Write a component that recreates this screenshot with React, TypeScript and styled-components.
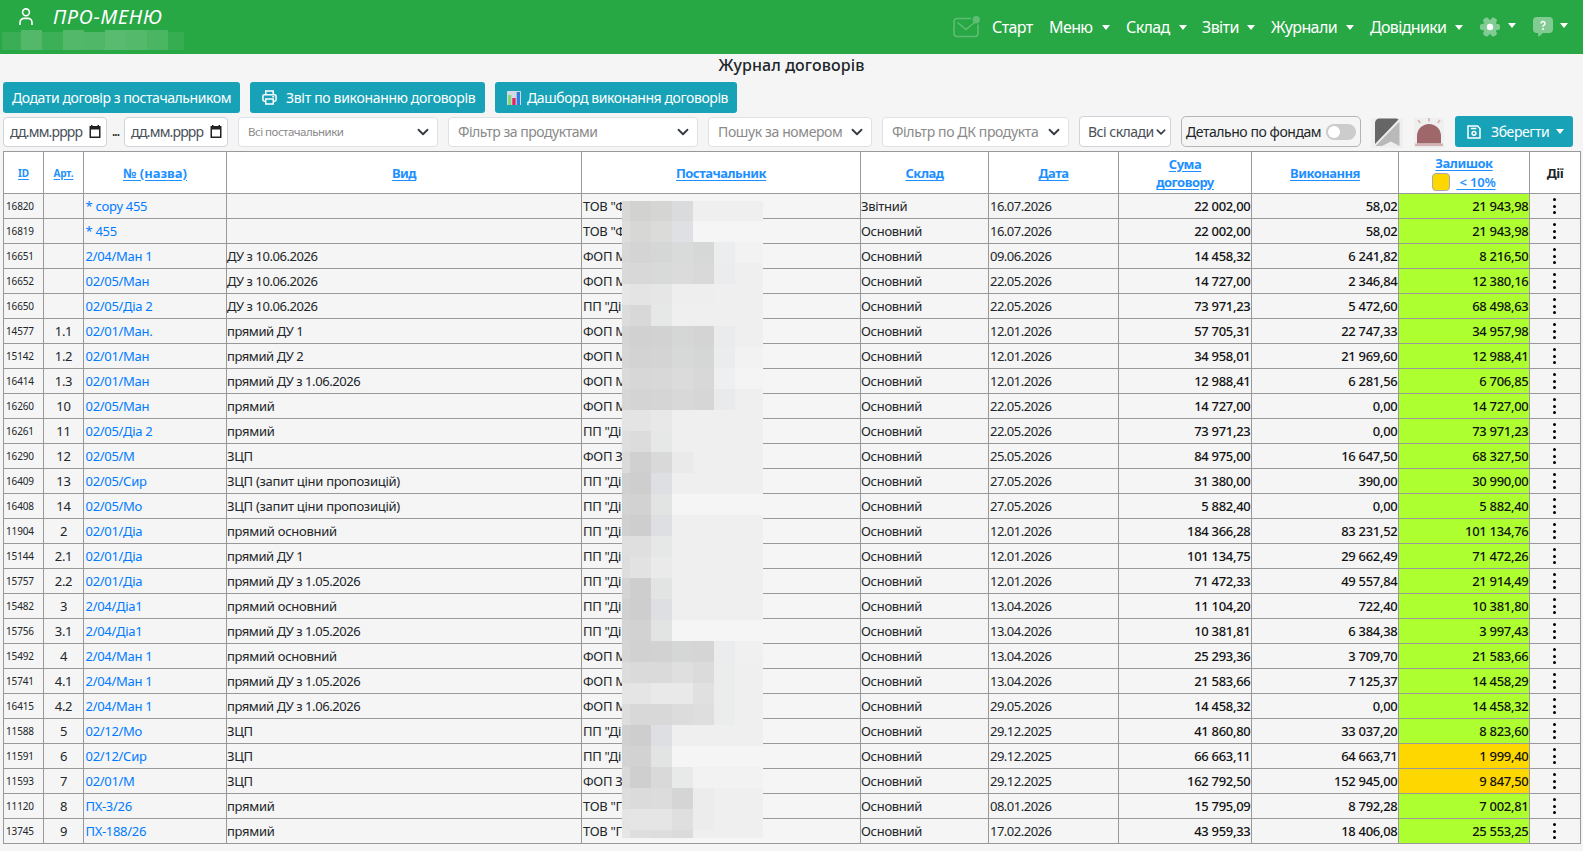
import styled, { createGlobalStyle } from "styled-components";

const GlobalStyle = createGlobalStyle`
    * {
        box-sizing: border-box;
    }

    body {
        margin: 0;
        background: #f5f5f5;
        color: #212529;
        font-family: "Noto Sans", "Open Sans", sans-serif;
        font-size: 14px;
        overflow: hidden;
    }
`;

const Header = styled.header`
    display: flex;
    justify-content: space-between;
    height: 54px;
    background: #28a745;
    color: #fff;
`;

const Brand = styled.div`
    padding: 2px 0 0 2px;
`;

const BrandTitle = styled.div`
    display: flex;
    align-items: center;
    height: 28px;
    padding-left: 17px;
    gap: 20px;
    font-size: 20px;
    font-style: italic;
    letter-spacing: 0.75px;

    svg {
        display: block;
    }
`;

const BrandMosaic = styled.div`
    display: flex;
    align-items: flex-end;
    height: 20px;
`;

const BrandCell = styled.div<{ $width: number; $alpha: number; $tall?: boolean }>`
    width: ${(p) => p.$width}px;
    height: ${(p) => (p.$tall ? 20 : 18)}px;
    background: rgba(255, 255, 255, ${(p) => p.$alpha});
`;

const Nav = styled.nav`
    display: flex;
    align-items: center;
    height: 54px;
    padding-right: 15px;
    font-size: 16px;
`;

const NavItem = styled.div<{ $width: number; $gap?: number; $spacing?: number }>`
    display: flex;
    align-items: center;
    justify-content: space-between;
    width: ${(p) => p.$width}px;
    margin-right: ${(p) => p.$gap ?? 16}px;
    letter-spacing: ${(p) => p.$spacing ?? -0.6}px;
    white-space: nowrap;

    svg {
        display: block;
    }
`;

const Caret = styled.span<{ $up?: number; $shift?: number }>`
    border-top: 5px solid #fff;
    border-left: 4.5px solid transparent;
    border-right: 4.5px solid transparent;
    margin-bottom: ${(p) => p.$up ?? 0}px;
    margin-left: ${(p) => p.$shift ?? 0}px;
`;

const Title = styled.h1`
    margin: 0;
    height: 28px;
    line-height: 23px;
    font-size: 16px;
    font-weight: 500;
    text-align: center;
    letter-spacing: 0.1px;
`;

const Actions = styled.div`
    display: flex;
    gap: 10px;
    padding-left: 3px;
`;

const Button = styled.button<{ $width: number; $pad?: number; $gap?: number; $spacing?: number }>`
    display: flex;
    align-items: center;
    width: ${(p) => p.$width}px;
    height: 31px;
    padding: 0 0 0 ${(p) => p.$pad ?? 9}px;
    gap: ${(p) => p.$gap ?? 8}px;
    border: 0;
    border-radius: 3px;
    background: #17a2b8;
    color: #fff;
    font-family: inherit;
    font-size: 14px;
    letter-spacing: ${(p) => p.$spacing ?? -0.42}px;
    white-space: nowrap;
`;

const Filters = styled.div`
    display: flex;
    align-items: center;
    height: 31px;
    margin-top: 3px;
    padding-left: 3px;
`;

const Field = styled.div<{ $width: number; $gap?: number; $native?: boolean; $size?: number; $spacing?: number }>`
    display: flex;
    align-items: center;
    justify-content: space-between;
    width: ${(p) => p.$width}px;
    height: ${(p) => (p.$native ? 31 : 30)}px;
    margin-right: ${(p) => p.$gap ?? 10}px;
    padding: 0 ${(p) => (p.$native ? 4 : 8)}px 0 ${(p) => (p.$native ? 8 : 9)}px;
    border: 1px solid ${(p) => (p.$native ? "#ced4da" : "#dee2e6")};
    border-radius: 4px;
    background: #fff;
    color: ${(p) => (p.$native ? "#495057" : "#8a8a8a")};
    font-size: ${(p) => p.$size ?? 14}px;
    letter-spacing: ${(p) => p.$spacing ?? -0.38}px;
    white-space: nowrap;

    svg {
        display: block;
        flex: none;
    }
`;

const DateField = styled(Field)`
    height: 30px;
    padding: 0 5px 0 6px;
    letter-spacing: -0.85px;
`;

const Dots = styled.span`
    width: 17px;
    text-align: center;
    letter-spacing: -1px;
    font-weight: 600;
    font-size: 12px;
`;

const FundsToggle = styled.div`
    display: flex;
    align-items: center;
    justify-content: space-between;
    width: 180px;
    height: 31px;
    margin-right: 10px;
    padding: 0 4px 0 4px;
    border: 1px solid #b5b5b5;
    border-radius: 5px;
    letter-spacing: -0.45px;
    white-space: nowrap;
`;

const Switch = styled.span`
    display: flex;
    align-items: center;
    width: 30px;
    height: 16px;
    padding-left: 2px;
    border-radius: 8px;
    background: #ccc;

    &::before {
        content: "";
        width: 12px;
        height: 12px;
        border-radius: 50%;
        background: #fff;
    }
`;

const IconTile = styled.div<{ $width: number; $gap: number }>`
    width: ${(p) => p.$width}px;
    height: 30px;
    margin: 2px ${(p) => p.$gap}px 0 0;
    background: #efefef;

    svg {
        display: block;
    }
`;

const TableWrap = styled.div`
    position: relative;
    margin: 4px 0 0 3px;
    width: 1578px;
`;

const Table = styled.table`
    width: 1578px;
    table-layout: fixed;
    border-collapse: collapse;
    font-size: 13px;
    letter-spacing: -0.3px;

    th,
    td {
        border: 1px solid #999;
        padding: 0 1px;
        line-height: 18px;
        white-space: nowrap;
    }
`;

const HeadCell = styled.th<{ $small?: boolean; $plain?: boolean; $spacing?: number }>`
    height: 42px;
    background: #fff;
    color: ${(p) => (p.$plain ? "#212529" : "#1e90ff")};
    font-size: ${(p) => (p.$small ? 10 : 13)}px;
    font-weight: 700;
    letter-spacing: ${(p) => p.$spacing ?? (p.$small ? -0.2 : -0.5)}px;

    u {
        text-underline-offset: 2px;
    }
`;

const LowBalance = styled.span`
    display: flex;
    align-items: center;
    justify-content: center;
    gap: 6px;
    height: 19px;
    font-weight: 600;
    letter-spacing: -0.2px;

    u {
        white-space: pre;
    }
`;

const Swatch = styled.i`
    width: 18px;
    height: 18px;
    border: 1px solid #aaa;
    border-radius: 4px;
    background: gold;
`;

const Row = styled.tr`
    height: 25px;
`;

const IdCell = styled.td`
    font-size: 10px;
    letter-spacing: -0.15px;

    && {
        padding: 0 0 1px 2px;
    }
`;

const ArtCell = styled.td`
    text-align: center;
`;

const NameCell = styled.td`
    color: #007bff;

    && {
        padding-left: 1.5px;
    }
`;

const TextCell = styled.td<{ $spacing?: number }>`
    letter-spacing: ${(p) => p.$spacing ?? -0.3}px;

    && {
        padding-left: 0;
    }
`;

const DateCell = styled.td`
    letter-spacing: -0.5px;
`;

const MoneyCell = styled.td<{ $bg?: string }>`
    background: ${(p) => p.$bg || "transparent"};
    text-align: right;
    font-weight: 500;
    color: #111;

    && {
        padding-right: 0.5px;
    }
`;

const MenuDots = styled.div`
    display: flex;
    flex-direction: column;
    align-items: center;
    gap: 3.7px;
    padding-right: 1px;

    i {
        width: 3px;
        height: 3px;
        border-radius: 50%;
        background: #000;
    }
`;

// pixelated cover over supplier names
const Mosaic = styled.div`
    position: absolute;
    left: 619px;
    top: 50px;
    display: grid;
    grid-template-columns: 8px 21px 21px 21px 21px 21px 28px;
    grid-template-rows: 20px repeat(29, 21px) 8px;
`;

const MosaicCell = styled.div<{ $color: string }>`
    background: ${(p) => p.$color};
`;

const columns = [40, 40, 143, 355, 279, 128, 130, 133, 147, 131, 51];

const rows = [
    ["16820", "", "* copy 455", "", 'ТОВ "Ф', "Звітний", "16.07.2026", "22 002,00", "58,02", "21 943,98"],
    ["16819", "", "* 455", "", 'ТОВ "Ф', "Основний", "16.07.2026", "22 002,00", "58,02", "21 943,98"],
    ["16651", "", "2/04/Ман 1", "ДУ з 10.06.2026", "ФОП М", "Основний", "09.06.2026", "14 458,32", "6 241,82", "8 216,50"],
    ["16652", "", "02/05/Ман", "ДУ з 10.06.2026", "ФОП М", "Основний", "22.05.2026", "14 727,00", "2 346,84", "12 380,16"],
    ["16650", "", "02/05/Діа 2", "ДУ з 10.06.2026", 'ПП "Ді', "Основний", "22.05.2026", "73 971,23", "5 472,60", "68 498,63"],
    ["14577", "1.1", "02/01/Ман.", "прямий ДУ 1", "ФОП М", "Основний", "12.01.2026", "57 705,31", "22 747,33", "34 957,98"],
    ["15142", "1.2", "02/01/Ман", "прямий ДУ 2", "ФОП М", "Основний", "12.01.2026", "34 958,01", "21 969,60", "12 988,41"],
    ["16414", "1.3", "02/01/Ман", "прямий ДУ з 1.06.2026", "ФОП М", "Основний", "12.01.2026", "12 988,41", "6 281,56", "6 706,85"],
    ["16260", "10", "02/05/Ман", "прямий", "ФОП М", "Основний", "22.05.2026", "14 727,00", "0,00", "14 727,00"],
    ["16261", "11", "02/05/Діа 2", "прямий", 'ПП "Ді', "Основний", "22.05.2026", "73 971,23", "0,00", "73 971,23"],
    ["16290", "12", "02/05/М", "ЗЦП", "ФОП З", "Основний", "25.05.2026", "84 975,00", "16 647,50", "68 327,50"],
    ["16409", "13", "02/05/Сир", "ЗЦП (запит ціни пропозицій)", 'ПП "Ді', "Основний", "27.05.2026", "31 380,00", "390,00", "30 990,00"],
    ["16408", "14", "02/05/Мо", "ЗЦП (запит ціни пропозицій)", 'ПП "Ді', "Основний", "27.05.2026", "5 882,40", "0,00", "5 882,40"],
    ["11904", "2", "02/01/Діа", "прямий основний", 'ПП "Ді', "Основний", "12.01.2026", "184 366,28", "83 231,52", "101 134,76"],
    ["15144", "2.1", "02/01/Діа", "прямий ДУ 1", 'ПП "Ді', "Основний", "12.01.2026", "101 134,75", "29 662,49", "71 472,26"],
    ["15757", "2.2", "02/01/Діа", "прямий ДУ з 1.05.2026", 'ПП "Ді', "Основний", "12.01.2026", "71 472,33", "49 557,84", "21 914,49"],
    ["15482", "3", "2/04/Діа1", "прямий основний", 'ПП "Ді', "Основний", "13.04.2026", "11 104,20", "722,40", "10 381,80"],
    ["15756", "3.1", "2/04/Діа1", "прямий ДУ з 1.05.2026", 'ПП "Ді', "Основний", "13.04.2026", "10 381,81", "6 384,38", "3 997,43"],
    ["15492", "4", "2/04/Ман 1", "прямий основний", "ФОП М", "Основний", "13.04.2026", "25 293,36", "3 709,70", "21 583,66"],
    ["15741", "4.1", "2/04/Ман 1", "прямий ДУ з 1.05.2026", "ФОП М", "Основний", "13.04.2026", "21 583,66", "7 125,37", "14 458,29"],
    ["16415", "4.2", "2/04/Ман 1", "прямий ДУ з 1.06.2026", "ФОП М", "Основний", "29.05.2026", "14 458,32", "0,00", "14 458,32"],
    ["11588", "5", "02/12/Мо", "ЗЦП", 'ПП "Ді', "Основний", "29.12.2025", "41 860,80", "33 037,20", "8 823,60"],
    ["11591", "6", "02/12/Сир", "ЗЦП", 'ПП "Ді', "Основний", "29.12.2025", "66 663,11", "64 663,71", "1 999,40"],
    ["11593", "7", "02/01/М", "ЗЦП", "ФОП З", "Основний", "29.12.2025", "162 792,50", "152 945,00", "9 847,50"],
    ["11120", "8", "ПХ-3/26", "прямий", 'ТОВ "Г', "Основний", "08.01.2026", "15 795,09", "8 792,28", "7 002,81"],
    ["13745", "9", "ПХ-188/26", "прямий", 'ТОВ "Г', "Основний", "17.02.2026", "43 959,33", "18 406,08", "25 553,25"],
];

const toNumber = (s: string) => parseFloat(s.replace(/ /g, "").replace(",", "."));

// seven colours per line, two digits stand for a grey
const mosaic = [
    "d8d8d7 d2d2d0 d5d5d3 dadbdd ef ef ef",
    "dddddc d7d7d6 dbdbd9 dfe0e3 f5 f5 f5",
    "d6d7d6 d4 d5d7d6 d9dada d6d8d7 ecedef f2",
    "d9 d8 d8dad9 db d9 ebecee ef",
    "e6 e4 e6 ee ee ef ef",
    "dc d8 e6e8e7 ef ef ef ef",
    "d4 d1 d2 d5d7d6 d4 eaebed ef",
    "d6 d3 d4 d7d9d8 d5d7d6 ebecee f2",
    "da d7 d8 db d8 eeeff1 f4",
    "d6 d4 d5 d8 d6 e9eaec ef",
    "e4 e4 e8 ef ef ef ef",
    "de dc e6e8e7 ef ef ef ef",
    "da d0 d9 ea ef ef ef",
    "d0 ce dedfe2 ef ef ef ef",
    "d3 d2 e2e4e3 f5 f5 f5 f5",
    "d0 ce dedfe2 ef ef ef ef",
    "df df e6e8e7 ef ef ef ef",
    "dd e2 ea ef ef ef ef",
    "d4 ce e2e4e3 ef ef ef ef",
    "d0 ce dedfe2 ef ef ef ef",
    "d3 d2 e2e4e3 f5 f5 f5 f5",
    "d6d5d4 d1 d2 d5d7d6 d5 eaeced f0",
    "dc da da df db ebedec ef",
    "e4e5e4 e5 e9 e9 e0 ebedec ef",
    "dd d8 d8 dc de ebedec ef",
    "d0 ce dedfe2 ef ef ef ef",
    "d3 d2 e2e4e3 f5 f5 f5 f5",
    "d9 cf d9 e8eae9 f2 f2 f2",
    "dd db dc d5 ec ef ef",
    "e4 e5 e5 df ec ef ef",
    "e6 de dd db ef ef ef",
].flatMap((line) => line.split(" ").map((c) => "#" + (c.length === 2 ? c + c + c : c)));

function Chevron({ size = 12 }: { size?: number }) {
    return (
        <svg width={size} height={size} viewBox="0 0 16 16" fill="none" stroke="#343a40" strokeWidth="2.4" strokeLinecap="round" strokeLinejoin="round">
            <path d="M2 5l6 6 6-6" />
        </svg>
    );
}

function CalendarIcon() {
    return (
        <svg width="12" height="13" viewBox="0 0 12 13">
            <path d="M2 0h1.5v1h5V0H10v1h1.5v12H.5V1H2zM2 4.5v7h8v-7z" fill="#222" fillRule="evenodd" />
        </svg>
    );
}

export default function App() {
    return (
        <>
            <GlobalStyle />
            <Header>
                <Brand>
                    <BrandTitle>
                        <svg width="14" height="17" viewBox="0 0 14 17" fill="none" stroke="#fff" strokeWidth="1.6">
                            <circle cx="7" cy="4.3" r="3.4" />
                            <path d="M1 17v-2.6a4 4 0 0 1 4-4h4a4 4 0 0 1 4 4V17" />
                        </svg>
                        ПРО-МЕНЮ
                    </BrandTitle>
                    <BrandMosaic>
                        <BrandCell $width={19} $alpha={0.09} />
                        <BrandCell $width={21} $alpha={0.2} $tall />
                        <BrandCell $width={21} $alpha={0.1} />
                        <BrandCell $width={21} $alpha={0.2} $tall />
                        <BrandCell $width={21} $alpha={0.19} />
                        <BrandCell $width={21} $alpha={0.23} $tall />
                        <BrandCell $width={21} $alpha={0.21} $tall />
                        <BrandCell $width={21} $alpha={0.16} $tall />
                        <BrandCell $width={16} $alpha={0.07} />
                    </BrandMosaic>
                </Brand>
                <Nav>
                    <NavItem $width={27} $gap={12}>
                        <svg width="27" height="22" viewBox="0 0 27 22" fill="none" stroke="#fff" strokeWidth="1.6" opacity="0.25">
                            <path d="M18 2.5H4A3 3 0 0 0 1 5.5v12a3 3 0 0 0 3 3h18a3 3 0 0 0 3-3V8.5M4.5 6.5l8.500 7 8.500-7" />
                            <circle cx="23.2" cy="3.7" r="3.7" fill="#fff" stroke="none" />
                        </svg>
                    </NavItem>
                    <NavItem $width={41}>Старт</NavItem>
                    <NavItem $width={61}>Меню <Caret /></NavItem>
                    <NavItem $width={61} $gap={15}>Склад <Caret /></NavItem>
                    <NavItem $width={53}>Звіти <Caret /></NavItem>
                    <NavItem $width={83}>Журнали <Caret /></NavItem>
                    <NavItem $width={93} $gap={17} $spacing={-0.65}>Довідники <Caret /></NavItem>
                    <NavItem $width={36} $gap={17}>
                        <svg width="20" height="20" viewBox="0 0 20 20">
                            <g fill="#fff" opacity="0.42">
                                <circle cx="10" cy="10" r="7.3" />
                                {[0, 60, 120].map((a) => (
                                    <rect key={a} x="0" y="7" width="20" height="6" rx="2" transform={`rotate(${a} 10 10)`} />
                                ))}
                            </g>
                            <circle cx="10" cy="10" r="3.2" fill="#fff" />
                        </svg>
                        <Caret $up={4} />
                    </NavItem>
                    <NavItem $width={35} $gap={0}>
                        <svg width="20" height="20" viewBox="0 0 20 20">
                            <path d="M4 0h12a4 4 0 0 1 4 4v8a4 4 0 0 1-4 4h-6l-4.500 4-.5-4H4a4 4 0 0 1-4-4V4a4 4 0 0 1 4-4z" fill="#fff" opacity="0.42" />
                            <path d="M8 6.5a2 2 0 1 1 3 1.700q-1 .6-1 1.600" fill="none" stroke="#fff" strokeWidth="1.5" />
                            <circle cx="10" cy="12" r="1" fill="#fff" />
                        </svg>
                        <Caret $up={4} />
                    </NavItem>
                </Nav>
            </Header>

            <Title>Журнал договорів</Title>

            <Actions>
                <Button $width={237}>Додати договір з постачальником</Button>
                <Button $width={235} $pad={12} $gap={9} $spacing={-0.32}>
                    <svg width="15" height="15" viewBox="0 0 16 16" fill="none" stroke="#fff" strokeWidth="1.6">
                        <path d="M4 5V1h8v4M4 12H2.500A1.500 1.500 0 0 1 1 10.500v-4A1.500 1.500 0 0 1 2.500 5h11A1.500 1.500 0 0 1 15 6.500v4a1.500 1.500 0 0 1-1.500 1.500H12M4 9.500h8V15H4zM11 7.300h2" />
                    </svg>
                    Звіт по виконанню договорів
                </Button>
                <Button $width={242} $pad={12} $gap={6}>
                    <svg width="14" height="14" viewBox="0 0 14 14">
                        <rect width="14" height="14" rx="0.5" fill="#d5d9e6" />
                        <rect x="1" y="4" width="3.3" height="10" fill="#86d972" />
                        <rect x="5.3" y="7" width="3.3" height="7" fill="#e0245e" />
                        <rect x="9.7" y="1" width="3.3" height="13" fill="#2f7de1" />
                    </svg>
                    Дашборд виконання договорів
                </Button>
            </Actions>

            <Filters>
                <DateField $width={104} $gap={0} $native>дд.мм.рррр <CalendarIcon /></DateField>
                <Dots>...</Dots>
                <DateField $width={104} $native>дд.мм.рррр <CalendarIcon /></DateField>
                <Field $width={200} $size={11.5} $spacing={-0.5}>Всі постачальники <Chevron /></Field>
                <Field $width={250} $spacing={-0.47}>Фільтр за продуктами <Chevron /></Field>
                <Field $width={164}>Пошук за номером <Chevron /></Field>
                <Field $width={187}>Фільтр по ДК продукта <Chevron /></Field>
                <Field $width={92} $native $spacing={-0.5}>Всі склади <Chevron size={10} /></Field>
                <FundsToggle>
                    Детально по фондам <Switch />
                </FundsToggle>
                <IconTile $width={32} $gap={11}>
                    <svg width="32" height="30" viewBox="0 0 32 30">
                        <path d="M4 26V5a4.500 4.500 0 0 1 4.500-4.500H25a4 4 0 0 1 2.500.9z" fill="#666" />
                        <path d="M28.500 3.500V28L20 23.500 11 28H4.500z" fill="#b9b9b9" />
                    </svg>
                </IconTile>
                <IconTile $width={30} $gap={11}>
                    <svg width="30" height="30" viewBox="0 0 30 30">
                        <path d="M3 25.500V18a12 12 0 0 1 24 0v7.500z" fill="#a0676b" />
                        <path d="M1 26.800h28" stroke="#d3b3b5" strokeWidth="2.5" />
                        <path d="M15 0v3.500M4 2l2.300 3M26 2l-2.300 3" stroke="#d3b3b5" strokeWidth="1.6" />
                    </svg>
                </IconTile>
                <Button $width={118} $pad={12} $gap={10}>
                    <svg width="14" height="14" viewBox="0 0 14 14" fill="none" stroke="#fff" strokeWidth="1.5">
                        <path d="M1 1h9.500L13 3.500V13H1zM3.800 3.600h5.500" />
                        <circle cx="7" cy="8.3" r="1.9" />
                    </svg>
                    Зберегти
                    <Caret $shift={-3} />
                </Button>
            </Filters>

            <TableWrap>
                <Table>
                    <colgroup>
                        {columns.map((w, i) => (
                            <col key={i} style={{ width: w }} />
                        ))}
                    </colgroup>
                    <thead>
                        <tr>
                            <HeadCell $small><u>ID</u></HeadCell>
                            <HeadCell $small><u>Арт.</u></HeadCell>
                            <HeadCell $spacing={0}><u>№ (назва)</u></HeadCell>
                            <HeadCell><u>Вид</u></HeadCell>
                            <HeadCell><u>Постачальник</u></HeadCell>
                            <HeadCell><u>Склад</u></HeadCell>
                            <HeadCell><u>Дата</u></HeadCell>
                            <HeadCell><u>Сума<br />договору</u></HeadCell>
                            <HeadCell><u>Виконання</u></HeadCell>
                            <HeadCell>
                                <u>Залишок</u>
                                <LowBalance><Swatch /> <u> &lt; 10%</u></LowBalance>
                            </HeadCell>
                            <HeadCell $plain>Дії</HeadCell>
                        </tr>
                    </thead>
                    <tbody>
                        {rows.map(([id, art, name, kind, supplier, store, date, sum, done, rest]) => (
                            <Row key={id}>
                                <IdCell>{id}</IdCell>
                                <ArtCell>{art}</ArtCell>
                                <NameCell>{name}</NameCell>
                                <TextCell $spacing={/\d/.test(kind) ? -0.43 : -0.28}>{kind}</TextCell>
                                <td>{supplier}</td>
                                <TextCell>{store}</TextCell>
                                <DateCell>{date}</DateCell>
                                <MoneyCell>{sum}</MoneyCell>
                                <MoneyCell>{done}</MoneyCell>
                                <MoneyCell $bg={toNumber(rest) < toNumber(sum) * 0.1 ? "#ffd700" : "#adff2f"}>{rest}</MoneyCell>
                                <td>
                                    <MenuDots><i /><i /><i /></MenuDots>
                                </td>
                            </Row>
                        ))}
                    </tbody>
                </Table>
                <Mosaic>
                    {mosaic.map((color, i) => (
                        <MosaicCell key={i} $color={color} />
                    ))}
                </Mosaic>
            </TableWrap>
        </>
    );
}
